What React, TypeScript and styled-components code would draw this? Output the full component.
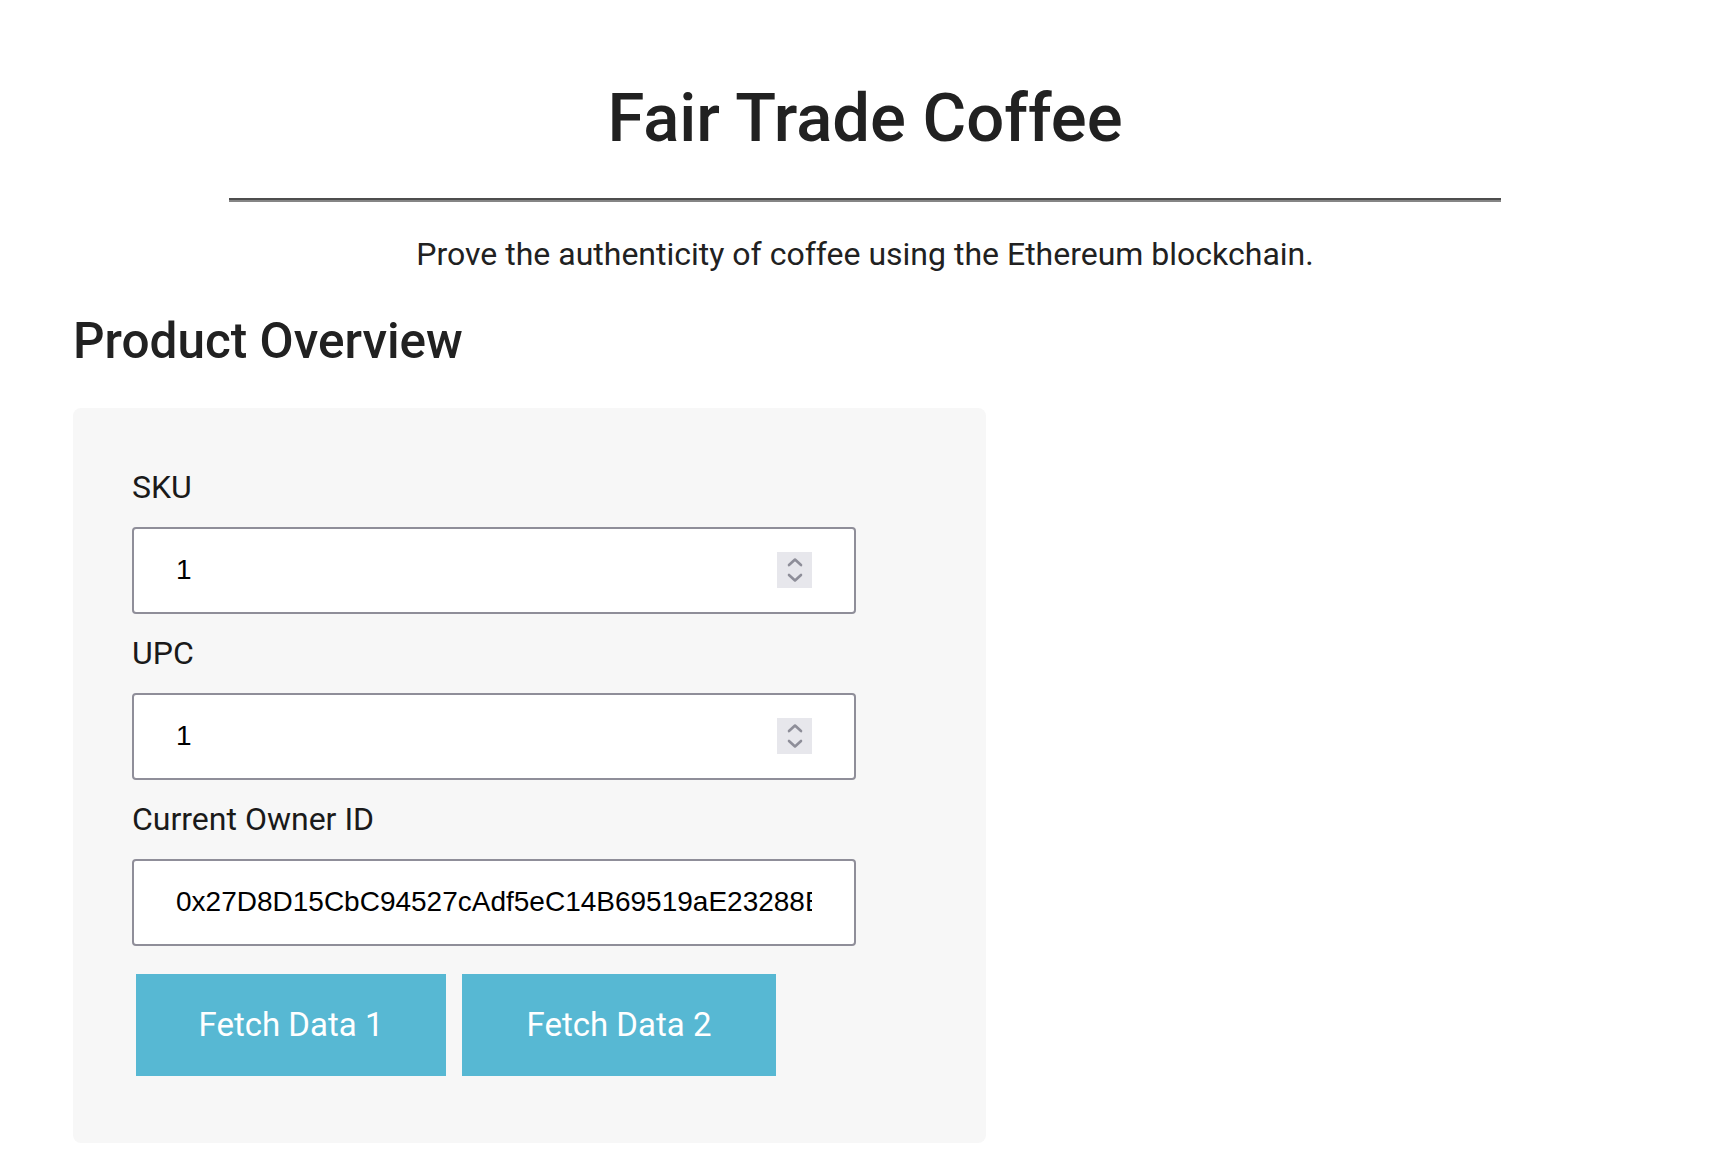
import React from "react";
import styled, { createGlobalStyle } from "styled-components";

const GlobalStyle = createGlobalStyle`
  html, body { margin: 0; padding: 0; background: #ffffff; }
  body { font-family: Roboto, "Noto Sans", Arial, sans-serif; color: #212121; }
  * { box-sizing: border-box; }
`;

const Page = styled.div`
  width: 1730px;
  padding: 85px 0 0 73px;
  display: flex;
  flex-direction: column;
  align-items: flex-start;
`;

const Header = styled.header`
  display: flex;
  flex-direction: column;
  align-items: center;
  margin-left: -73px;
  width: 1730px;
`;

const Title = styled.h1`
  margin: 0;
  font-size: 67px;
  line-height: 1;
  font-weight: 500;
  color: #212121;
`;

const Rule = styled.hr`
  width: 1272px;
  margin: 46px 0 0;
  border: 0;
  border-top: 2px solid #4e4e4e;
  border-bottom: 2px solid #858585;
  height: 0;
`;

const Subtitle = styled.p`
  margin: 36px 0 0;
  font-size: 32px;
  line-height: 1;
  color: #212121;
`;

const SectionTitle = styled.h2`
  margin: 47px 0 0;
  font-size: 49.5px;
  line-height: 1;
  font-weight: 500;
  color: #212121;
`;

const Card = styled.section`
  margin-top: 41px;
  width: 913px;
  background: #f7f7f7;
  border-radius: 8px;
  padding: 63px 59px 67px;
  display: flex;
  flex-direction: column;
`;

const Label = styled.label<{ $first?: boolean }>`
  display: block;
  margin: ${(p) => (p.$first ? "0" : "23px")} 0 24px;
  font-size: 32px;
  line-height: 1;
  color: #1a1a1a;
`;

const Field = styled.div`
  position: relative;
  width: 724px;
  height: 87px;
`;

const Input = styled.input`
  width: 100%;
  height: 100%;
  border: 2px solid #8f8e99;
  border-radius: 4px;
  background: #ffffff;
  padding: 0 42px;
  font-family: "Liberation Sans", Arial, sans-serif;
  font-size: 28px;
  color: #000;
  outline: none;
  -moz-appearance: textfield;
  &::-webkit-outer-spin-button,
  &::-webkit-inner-spin-button {
    -webkit-appearance: none;
    margin: 0;
  }
`;

const Spinner = styled.span`
  position: absolute;
  right: 44px;
  top: 25px;
  width: 35px;
  height: 36px;
  background: #e7e7ec;
  display: flex;
  align-items: center;
  justify-content: center;
`;

const Buttons = styled.div`
  margin: 28px 0 0 4px;
  display: flex;
  gap: 16px;
`;

const Button = styled.button<{ $w: number }>`
  width: ${(p) => p.$w}px;
  height: 102px;
  border: 0;
  border-radius: 0;
  background: #57b8d3;
  color: #ffffff;
  font-family: Roboto, Arial, sans-serif;
  font-size: 33px;
  cursor: pointer;
`;

const SpinIcon = () => (
  <svg width="18" height="28" viewBox="0 0 18 28" fill="none">
    <path d="M3 9 L9 3.5 L15 9" stroke="#8e8e99" strokeWidth="2.6" strokeLinecap="round" strokeLinejoin="round" />
    <path d="M3 19 L9 24.5 L15 19" stroke="#8e8e99" strokeWidth="2.6" strokeLinecap="round" strokeLinejoin="round" />
  </svg>
);

export default function App() {
  return (
    <>
      <GlobalStyle />
      <Page>
        <Header>
          <Title>Fair Trade Coffee</Title>
          <Rule />
          <Subtitle>Prove the authenticity of coffee using the Ethereum blockchain.</Subtitle>
        </Header>
        <SectionTitle>Product Overview</SectionTitle>
        <Card>
          <Label $first>SKU</Label>
          <Field>
            <Input type="number" defaultValue={1} />
            <Spinner>
              <SpinIcon />
            </Spinner>
          </Field>
          <Label>UPC</Label>
          <Field>
            <Input type="number" defaultValue={1} />
            <Spinner>
              <SpinIcon />
            </Spinner>
          </Field>
          <Label>Current Owner ID</Label>
          <Field>
            <Input type="text" defaultValue="0x27D8D15CbC94527cAdf5eC14B69519aE23288B5f" />
          </Field>
          <Buttons>
            <Button $w={310}>Fetch Data 1</Button>
            <Button $w={314}>Fetch Data 2</Button>
          </Buttons>
        </Card>
      </Page>
    </>
  );
}
